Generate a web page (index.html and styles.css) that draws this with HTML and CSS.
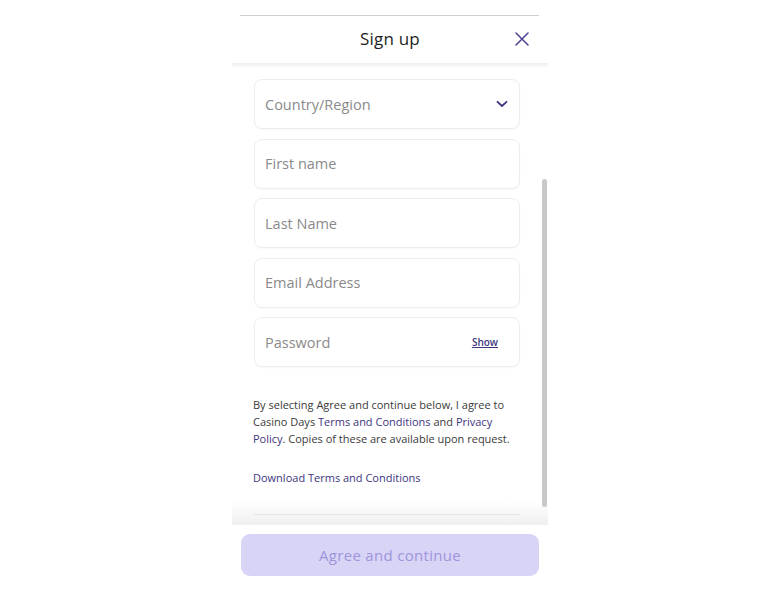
FILE: index.html
```html
<!DOCTYPE html>
<html lang="en">
<head>
    <meta charset="UTF-8">
    <meta name="viewport" content="width=device-width, initial-scale=1.0">
    <title>Sign up</title>
    <link rel="stylesheet" href="styles.css">
</head>
<body>
<div class="sheet">
    <div class="topline"></div>
    <div class="header">
        <h2>Sign up</h2>
        <button class="close" aria-label="Close">
            <svg width="16" height="16" viewBox="0 0 16 16"><path d="M2 2L14 14M14 2L2 14" stroke="#4e4896" stroke-width="1.6" stroke-linecap="round" fill="none"/></svg>
        </button>
    </div>

    <div class="content">
        <div class="field select">
            <span class="placeholder">Country/Region</span>
            <svg width="12" height="8" viewBox="0 0 12 8"><path d="M1.5 1.8L6 6L10.5 1.8" stroke="#3d3580" stroke-width="1.8" stroke-linecap="round" stroke-linejoin="round" fill="none"/></svg>
        </div>
        <div class="field"><span class="placeholder">First name</span></div>
        <div class="field"><span class="placeholder">Last Name</span></div>
        <div class="field"><span class="placeholder">Email Address</span></div>
        <div class="field">
            <span class="placeholder">Password</span>
            <a class="show" href="#">Show</a>
        </div>

        <p class="terms">By selecting Agree and continue below, I agree to Casino Days <a href="#">Terms and Conditions</a> and <a href="#">Privacy Policy</a>. Copies of these are available upon request.</p>
        <p class="download"><a href="#">Download Terms and Conditions</a></p>

        <div class="fade"></div>
        <div class="scrollbar"></div>
    </div>

    <div class="footer">
        <button class="agree">Agree and continue</button>
    </div>
</div>
</body>
</html>
```

FILE: styles.css
```css
body {
    margin: 0;
    background-color: #fff;
    font-family: "Open Sans", Arial, sans-serif;
    color: #222;
}
.sheet {
    width: 316px;
    height: 600px;
    margin: 0 auto;
    display: flex;
    flex-direction: column;
}
.topline {
    height: 1px;
    margin: 15px 9px 0 8px;
    background-color: #cfcfcf;
}
.header {
    height: 47px;
    display: flex;
    align-items: center;
    justify-content: center;
    position: relative;
    z-index: 2;
}
.header::after {
    content: "";
    position: absolute;
    left: 0;
    right: 0;
    top: 100%;
    height: 5px;
    background: linear-gradient(to bottom, rgba(0, 0, 0, 0.07), rgba(0, 0, 0, 0));
}
.header h2 {
    margin: 0 0 2px 0;
    font-size: 17px;
    font-weight: 400;
    color: #1e1e1e;
    letter-spacing: 0.2px;
}
.close {
    position: absolute;
    right: 17px;
    top: 14px;
    width: 18px;
    height: 18px;
    padding: 0;
    border: none;
    background: transparent;
    display: flex;
    align-items: center;
    justify-content: center;
}
.content {
    flex: 1;
    position: relative;
    overflow: hidden;
    padding: 16px 28px 0 22px;
    display: flex;
    flex-direction: column;
    gap: 9.5px;
}
.field {
    flex: none;
    height: 50px;
    box-sizing: border-box;
    border: 1px solid #ededed;
    border-radius: 8px;
    padding: 0 21px 0 10px;
    display: flex;
    align-items: center;
    justify-content: space-between;
    box-shadow: 0 1px 2px rgba(0, 0, 0, 0.03);
}
.placeholder {
    font-size: 14.5px;
    color: #8a8a8a;
}
.select {
    padding-right: 11px;
}
.show {
    font-size: 10px;
    font-weight: 600;
    color: #3d3580;
    text-decoration: underline;
}
.terms {
    margin: 19px 0 0 -1px;
    font-size: 11px;
    line-height: 17px;
    color: #3a3a3a;
}
.terms a,
.download a {
    color: #3d3580;
    text-decoration: none;
}
.download {
    margin: 13px 0 0 -1px;
    font-size: 11px;
    line-height: 17px;
}
.fade {
    position: absolute;
    left: 0;
    right: 0;
    bottom: 0;
    height: 24px;
    background: linear-gradient(to bottom, rgba(255, 255, 255, 0), #efefef);
}
.fade::after {
    content: "";
    position: absolute;
    left: 22px;
    right: 28px;
    top: 13px;
    height: 1px;
    background-color: #e6e6e6;
}
.scrollbar {
    position: absolute;
    right: 1px;
    top: 116px;
    width: 5px;
    height: 328px;
    border-radius: 3px;
    background-color: #c9c9c9;
}
.footer {
    height: 75px;
    padding: 9px 9px 0 9px;
    box-sizing: border-box;
}
.agree {
    width: 100%;
    height: 42px;
    border: none;
    border-radius: 9px;
    background-color: #d8d4f6;
    color: #9e95dc;
    font-family: "Open Sans", Arial, sans-serif;
    font-size: 15px;
    font-weight: 500;
    letter-spacing: 0.3px;
}
```
